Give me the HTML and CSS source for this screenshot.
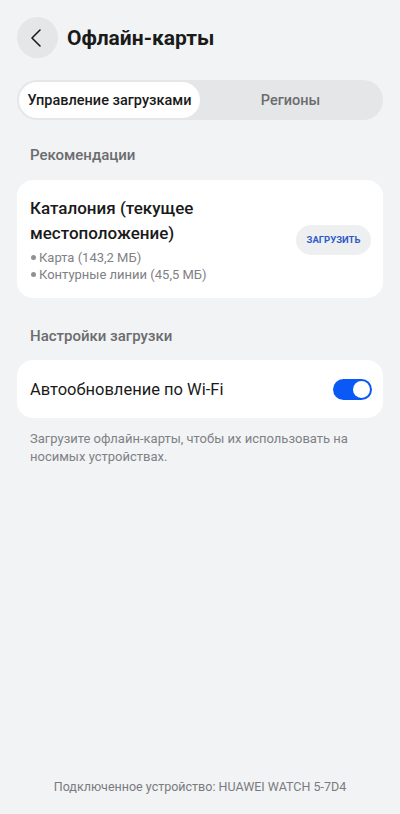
FILE: index.html
```html
<!DOCTYPE html>
<html>
<head>
<title>Офлайн-карты</title>
<link rel="stylesheet" href="styles.css">
</head>
<body>

<div id="page">
  <div class="header">
    <button class="backButton">
      <svg width="20" height="20" viewBox="0 0 20 20"><path d="M13 2 L5 10 L13 18" fill="none" stroke="#1a1a1a" stroke-width="1.6" stroke-linecap="round" stroke-linejoin="round"/></svg>
    </button>
    <h1>Офлайн-карты</h1>
  </div>

  <div class="tabs">
    <div class="tab active">Управление загрузками</div>
    <div class="tab">Регионы</div>
  </div>

  <div class="sectionTitle">Рекомендации</div>
  <div class="card regionCard">
    <div class="regionInfo">
      <div class="regionName">Каталония (текущее местоположение)</div>
      <ul class="sizes">
        <li>Карта (143,2 МБ)</li>
        <li>Контурные линии (45,5 МБ)</li>
      </ul>
    </div>
    <button class="downloadButton">ЗАГРУЗИТЬ</button>
  </div>

  <div class="sectionTitle settingsTitle">Настройки загрузки</div>
  <div class="card switchRow">
    <span>Автообновление по Wi-Fi</span>
    <div class="toggle"><div class="knob"></div></div>
  </div>
  <p class="hint">Загрузите офлайн-карты, чтобы их использовать на носимых устройствах.</p>

  <div class="device">Подключенное устройство: HUAWEI WATCH 5-7D4</div>
</div>

</body>
</html>
```

FILE: styles.css
```css
body {
  margin: 0;
  background-color: #f1f3f5;
  font-family: Roboto, "Noto Sans", sans-serif;
  color: #1a1a1a;
}

#page {
  height: 814px;
  padding: 0 17px;
  box-sizing: border-box;
  display: flex;
  flex-direction: column;
}

.header {
  display: flex;
  align-items: center;
  gap: 9px;
  padding-top: 17px;
}

.backButton {
  width: 41px;
  height: 41px;
  border-radius: 50%;
  border: none;
  background-color: #e5e6e8;
  display: flex;
  align-items: center;
  justify-content: center;
  padding: 0 2px 0 0;
}

.header h1 {
  margin: 0;
  font-size: 21px;
  font-weight: 700;
  color: #1a1a1a;
}

.tabs {
  margin-top: 22px;
  height: 40px;
  background-color: #e5e6e8;
  border-radius: 20px;
  padding: 2px;
  box-sizing: border-box;
  display: flex;
}

.tab {
  flex: 1;
  display: flex;
  align-items: center;
  justify-content: center;
  font-size: 14.5px;
  font-weight: 500;
  color: #6b6c6e;
  border-radius: 18px;
}

.tab.active {
  background-color: white;
  color: #1a1a1a;
}

.sectionTitle {
  margin: 26px 13px 16px;
  font-size: 15px;
  font-weight: 500;
  color: #6b6c6e;
}

.settingsTitle {
  margin-top: 29px;
  margin-bottom: 15px;
}

.card {
  background-color: white;
  border-radius: 16px;
}

.regionCard {
  display: flex;
  align-items: center;
  padding: 16px 12px 15px 13px;
}

.regionInfo {
  flex: 1;
}

.regionName {
  font-size: 17px;
  font-weight: 500;
  line-height: 25px;
  padding-right: 20px;
}

.sizes {
  list-style: none;
  margin: 3px 0 0;
  padding: 0;
  font-size: 13px;
  line-height: 17px;
  color: #808184;
}

.sizes li::before {
  content: "";
  display: inline-block;
  width: 5px;
  height: 5px;
  border-radius: 50%;
  background-color: #909194;
  margin: 0 3px 2px 1px;
  vertical-align: middle;
}

.downloadButton {
  border: none;
  background-color: #eeeff1;
  border-radius: 15px;
  height: 30px;
  width: 75px;
  font-family: Roboto, sans-serif;
  font-size: 9.5px;
  font-weight: 700;
  color: #2e5cc7;
  padding: 0;
}

.switchRow {
  display: flex;
  align-items: center;
  justify-content: space-between;
  height: 58px;
  padding: 0 11px 0 13px;
  font-size: 16.5px;
}

.toggle {
  width: 39px;
  height: 21px;
  border-radius: 11px;
  background-color: #0a59f7;
  position: relative;
}

.toggle .knob {
  position: absolute;
  right: 2px;
  top: 2px;
  width: 17px;
  height: 17px;
  border-radius: 50%;
  background-color: white;
}

.hint {
  margin: 12px 13px 0;
  font-size: 13px;
  line-height: 18px;
  color: #808184;
}

.device {
  margin-top: auto;
  margin-bottom: 20px;
  text-align: center;
  font-size: 12.5px;
  color: #7a7b7e;
}
```
